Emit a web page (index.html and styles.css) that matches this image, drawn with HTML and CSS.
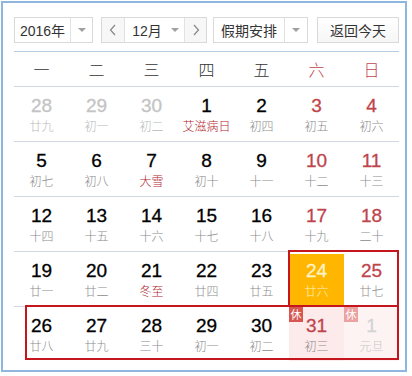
FILE: index.html
```html
<!DOCTYPE html>
<html lang="zh">
<head>
<meta charset="utf-8">
<title>日历</title>
<link rel="stylesheet" href="styles.css">
</head>
<body>
<div class="frame">
  <div class="toolbar">
    <div class="select year">
      <span class="sel-text">2016年</span>
      <span class="sel-arrow"><i class="tri"></i></span>
    </div>
    <div class="month-group">
      <span class="nav prev"><svg width="8" height="12" viewBox="0 0 8 12"><path d="M6 1 L1.5 6 L6 11" fill="none" stroke="#888" stroke-width="1.2"/></svg></span>
      <span class="month-mid">12月<i class="tri"></i></span>
      <span class="nav next"><svg width="8" height="12" viewBox="0 0 8 12"><path d="M2 1 L6.5 6 L2 11" fill="none" stroke="#888" stroke-width="1.2"/></svg></span>
    </div>
    <div class="select holiday">
      <span class="sel-text">假期安排</span>
      <span class="sel-arrow"><i class="tri"></i></span>
    </div>
    <div class="btn today">返回今天</div>
  </div>

  <div class="weekdays">
    <span>一</span><span>二</span><span>三</span><span>四</span><span>五</span><span class="we">六</span><span class="we">日</span>
  </div>

  <div class="days">
    <div class="week">
      <div class="day other"><b>28</b><small>廿九</small></div>
      <div class="day other"><b>29</b><small>初一</small></div>
      <div class="day other"><b>30</b><small>初二</small></div>
      <div class="day fest"><b>1</b><small>艾滋病日</small></div>
      <div class="day"><b>2</b><small>初四</small></div>
      <div class="day we"><b>3</b><small>初五</small></div>
      <div class="day we"><b>4</b><small>初六</small></div>
    </div>
    <div class="week">
      <div class="day"><b>5</b><small>初七</small></div>
      <div class="day"><b>6</b><small>初八</small></div>
      <div class="day fest"><b>7</b><small>大雪</small></div>
      <div class="day"><b>8</b><small>初十</small></div>
      <div class="day"><b>9</b><small>十一</small></div>
      <div class="day we"><b>10</b><small>十二</small></div>
      <div class="day we"><b>11</b><small>十三</small></div>
    </div>
    <div class="week">
      <div class="day"><b>12</b><small>十四</small></div>
      <div class="day"><b>13</b><small>十五</small></div>
      <div class="day"><b>14</b><small>十六</small></div>
      <div class="day"><b>15</b><small>十七</small></div>
      <div class="day"><b>16</b><small>十八</small></div>
      <div class="day we"><b>17</b><small>十九</small></div>
      <div class="day we"><b>18</b><small>二十</small></div>
    </div>
    <div class="week">
      <div class="day"><b>19</b><small>廿一</small></div>
      <div class="day"><b>20</b><small>廿二</small></div>
      <div class="day fest"><b>21</b><small>冬至</small></div>
      <div class="day"><b>22</b><small>廿四</small></div>
      <div class="day"><b>23</b><small>廿五</small></div>
      <div class="day today-cell"><b>24</b><small>廿六</small></div>
      <div class="day we"><b>25</b><small>廿七</small></div>
    </div>
    <div class="week">
      <div class="day"><b>26</b><small>廿八</small></div>
      <div class="day"><b>27</b><small>廿九</small></div>
      <div class="day"><b>28</b><small>三十</small></div>
      <div class="day"><b>29</b><small>初一</small></div>
      <div class="day"><b>30</b><small>初二</small></div>
      <div class="day we rest"><span class="badge">休</span><b>31</b><small>初三</small></div>
      <div class="day other rest rest-other"><span class="badge">休</span><b>1</b><small>元旦</small></div>
    </div>
    <div class="mark mark-a"></div>
    <div class="mark mark-b"></div>
  </div>
</div>
</body>
</html>
```

FILE: styles.css
```css
* { box-sizing: border-box; }
html, body { margin: 0; padding: 0; background: #fff; }
body { font-family: "Liberation Sans", Arial, "Noto Sans CJK SC", sans-serif; color: #333; }

.frame {
  margin: 1px 0 0 1px;
  width: 406px;
  height: 371px;
  border: 2px solid #8fb6df;
  background: #fff;
  padding: 14px 6px 0 11px;
}

.toolbar {
  display: flex;
  align-items: center;
  height: 35px;
  padding-bottom: 9px;
  border-bottom: 1px solid #b5cbe2;
  width: 385px;
  font-family: "Liberation Sans", Arial, "Noto Sans CJK SC", sans-serif;
  font-size: 14px;
  color: #333;
}

.select, .month-group, .btn {
  height: 26px;
  border: 1px solid #d9d9d9;
  background: #fff;
  display: flex;
  align-items: stretch;
}

.sel-text { display: flex; align-items: center; justify-content: center; }
.sel-arrow { display: flex; align-items: center; justify-content: center; border-left: 1px solid #e2e2e2; }

.tri {
  display: inline-block;
  width: 0; height: 0;
  border-left: 4px solid transparent;
  border-right: 4px solid transparent;
  border-top: 4px solid #a0a0a0;
}

.year { width: 79px; }
.year .sel-text { width: 55px; }
.year .sel-arrow { flex: 1; }

.month-group { width: 106px; margin-left: 8px; }
.nav { display: flex; align-items: center; justify-content: center; background: #f7f7f7; }
.prev { width: 23px; border-right: 1px solid #e2e2e2; }
.next { flex: 1; border-left: 1px solid #e2e2e2; }
.month-mid { width: 59px; display: flex; align-items: center; justify-content: center; gap: 9px; padding-left: 2px; }

.holiday { width: 95px; margin-left: 6px; }
.holiday .sel-text { width: 70px; }
.holiday .sel-arrow { flex: 1; }

.btn.today { width: 82px; margin-left: 9px; justify-content: center; align-items: center; background: linear-gradient(#fff, #f6f6f6); }

.weekdays {
  display: grid;
  grid-template-columns: repeat(7, 55px);
  width: 385px;
  height: 34px;
  font-family: "Noto Sans CJK SC", sans-serif;
  font-size: 16px;
  font-weight: 300;
  color: #333;
}
.weekdays span { display: flex; align-items: center; justify-content: center; }
.weekdays .we { color: #c0444c; }

.days { position: relative; width: 385px; }

.week {
  display: grid;
  grid-template-columns: repeat(7, 55px);
  border-top: 1px solid #cfd8e2;
  height: 55px;
}

.day {
  position: relative;
  height: 54px;
  display: flex;
  flex-direction: column;
  align-items: center;
  padding-top: 9px;
}
.day b {
  display: block;
  font-family: "Liberation Sans", Arial, sans-serif;
  font-size: 19px;
  font-weight: normal;
  line-height: 20px;
  color: #000;
  -webkit-text-stroke: 0.3px currentColor;
}
.day small {
  display: block;
  margin-top: 2px;
  font-family: "Noto Sans CJK SC", sans-serif;
  font-size: 12px;
  font-weight: 300;
  line-height: 16px;
  color: #8c8c8c;
}

.day.other b { color: #c4c4c4; }
.day.other small { color: #b9b9b9; }
.day.fest small { color: #b3262e; }
.day.we b { color: #c0444c; }

.day.today-cell { background: #ffb600; margin-top: 2px; height: 52px; padding-top: 7px; }
.day.today-cell b { color: #fff3c8; }
.day.today-cell small { color: #fff0c0; }

.day.rest { background: #fdebec; }
.day.rest-other { background: #fdf3f3; }
.day.rest-other b { color: #d4d4d4; }
.day.rest-other small { color: #c8c8c8; }

.badge {
  position: absolute;
  left: 0;
  top: 0;
  width: 14px;
  height: 15px;
  background: #d5574f;
  color: #fff;
  font-family: "Noto Sans CJK SC", sans-serif;
  font-size: 11px;
  line-height: 15px;
  text-align: center;
  -webkit-text-stroke: 0;
}
.rest-other .badge { background: #eba2a2; }

.mark {
  position: absolute;
  border: 2px solid #c4161c;
  pointer-events: none;
}
.mark-a { left: 274px; top: 164px; width: 111px; height: 57px; }
.mark-b { left: 11px; top: 219px; width: 374px; height: 55px; }
```
